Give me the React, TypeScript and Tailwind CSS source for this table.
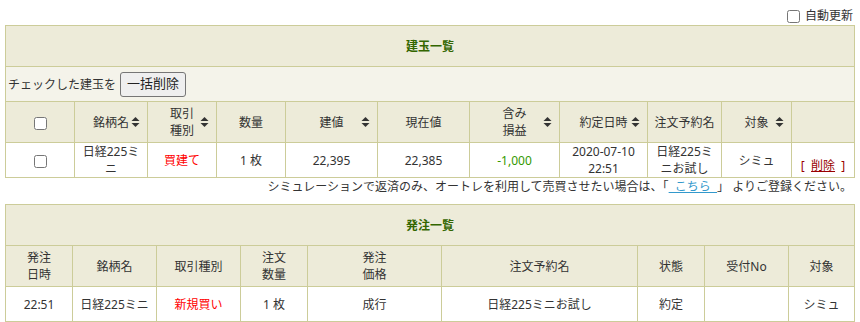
import React from 'react';

const font = { fontFamily: '"Noto Sans", "Noto Sans CJK JP", sans-serif' };

const SortIcon = () => (
  <svg className="absolute right-[7px] top-1/2 -translate-y-1/2" width="9" height="11" viewBox="0 0 9 11">
    <path d="M4.5 0.5 L8.5 4.5 H0.5 Z" fill="#333" />
    <path d="M4.5 10.5 L8.5 6.5 H0.5 Z" fill="#333" />
  </svg>
);

const Check = () => <input type="checkbox" className="w-[13px] h-[13px] align-middle m-0" />;

const positionCols = [69, 73, 69, 69, 92, 92, 90, 88, 74, 70, 63];
const orderCols = [67, 84, 84, 67, 134, 196, 67, 84, 66];

const cell = 'border border-[#cccc99] text-center align-middle px-[4px] leading-[17px]';

const HeadCell = ({ children, sort = false }: { children: React.ReactNode; sort?: boolean }) => (
  <th className={`${cell} font-normal relative`}>
    <span className="inline-block">{children}</span>
    {sort && <SortIcon />}
  </th>
);

export default function App() {
  return (
    <div className="w-[860px] h-[322px] bg-white text-[12px] text-[#333] overflow-hidden" style={font}>
      {/* auto refresh */}
      <div className="h-[25px] flex items-end justify-end pr-[7px] pb-[1px]">
        <label className="flex items-center gap-[5px] leading-[16px]">
          <Check />
          <span>自動更新</span>
        </label>
      </div>

      {/* positions */}
      <table className="ml-[5px] w-[850px] table-fixed border-collapse">
        <colgroup>
          {positionCols.map((w, i) => (
            <col key={i} style={{ width: w }} />
          ))}
        </colgroup>
        <tbody>
          <tr className="h-[41px] bg-[#edebd9]">
            <td colSpan={11} className={`${cell} font-bold text-[#336600]`}>建玉一覧</td>
          </tr>
          <tr className="h-[35px] bg-[#f4f3ea]">
            <td colSpan={11} className="border border-[#cccc99] pl-[2px] align-middle">
              <span className="align-middle">チェックした建玉を</span>
              <button className="ml-[4px] align-middle h-[25px] px-[6px] border border-[#767676] rounded-[3px] bg-[#efefef] text-[#222] text-[13px]">
                一括削除
              </button>
            </td>
          </tr>
          <tr className="h-[41px] bg-[#edebd9]">
            <th className={`${cell} font-normal`}><Check /></th>
            <HeadCell sort>銘柄名</HeadCell>
            <HeadCell sort>取引<br />種別</HeadCell>
            <HeadCell>数量</HeadCell>
            <HeadCell sort>建値</HeadCell>
            <HeadCell>現在値</HeadCell>
            <HeadCell sort>含み<br />損益</HeadCell>
            <HeadCell sort>約定日時</HeadCell>
            <HeadCell>注文予約名</HeadCell>
            <HeadCell sort>対象</HeadCell>
            <HeadCell>{''}</HeadCell>
          </tr>
          <tr className="h-[35px] bg-white">
            <td className={cell}><Check /></td>
            <td className={cell}>日経225ミ<br />ニ</td>
            <td className={`${cell} text-[#ff0000]`}>買建て</td>
            <td className={cell}>1 枚</td>
            <td className={cell}>22,395</td>
            <td className={cell}>22,385</td>
            <td className={`${cell} text-[#339900]`}>-1,000</td>
            <td className={cell}>2020-07-10<br />22:51</td>
            <td className={cell}>日経225ミ<br />ニお試し</td>
            <td className={cell}>シミュ</td>
            <td className={`${cell} pt-[10px] text-[#990000]`}>
              [&nbsp;&nbsp;<a className="underline">削除</a>&nbsp;&nbsp;]
            </td>
          </tr>
        </tbody>
      </table>

      <div className="h-[18px] mb-[8px] pr-[8px] text-right leading-[18px]">
        シミュレーションで返済のみ、オートレを利用して売買させたい場合は、「<a className="text-[#3399cc] underline">&nbsp;&nbsp;こちら&nbsp;&nbsp;</a>」 よりご登録ください。
      </div>

      {/* orders */}
      <table className="ml-[5px] w-[850px] table-fixed border-collapse">
        <colgroup>
          {orderCols.map((w, i) => (
            <col key={i} style={{ width: w }} />
          ))}
        </colgroup>
        <tbody>
          <tr className="h-[41px] bg-[#edebd9]">
            <td colSpan={9} className={`${cell} font-bold text-[#336600]`}>発注一覧</td>
          </tr>
          <tr className="h-[41px] bg-[#edebd9]">
            <HeadCell>発注<br />日時</HeadCell>
            <HeadCell>銘柄名</HeadCell>
            <HeadCell>取引種別</HeadCell>
            <HeadCell>注文<br />数量</HeadCell>
            <HeadCell>発注<br />価格</HeadCell>
            <HeadCell>注文予約名</HeadCell>
            <HeadCell>状態</HeadCell>
            <HeadCell>受付No</HeadCell>
            <HeadCell>対象</HeadCell>
          </tr>
          <tr className="h-[35px] bg-white">
            <td className={cell}>22:51</td>
            <td className={cell}>日経225ミニ</td>
            <td className={`${cell} text-[#ff0000]`}>新規買い</td>
            <td className={cell}>1 枚</td>
            <td className={cell}>成行</td>
            <td className={cell}>日経225ミニお試し</td>
            <td className={cell}>約定</td>
            <td className={cell}></td>
            <td className={cell}>シミュ</td>
          </tr>
        </tbody>
      </table>
    </div>
  );
}
